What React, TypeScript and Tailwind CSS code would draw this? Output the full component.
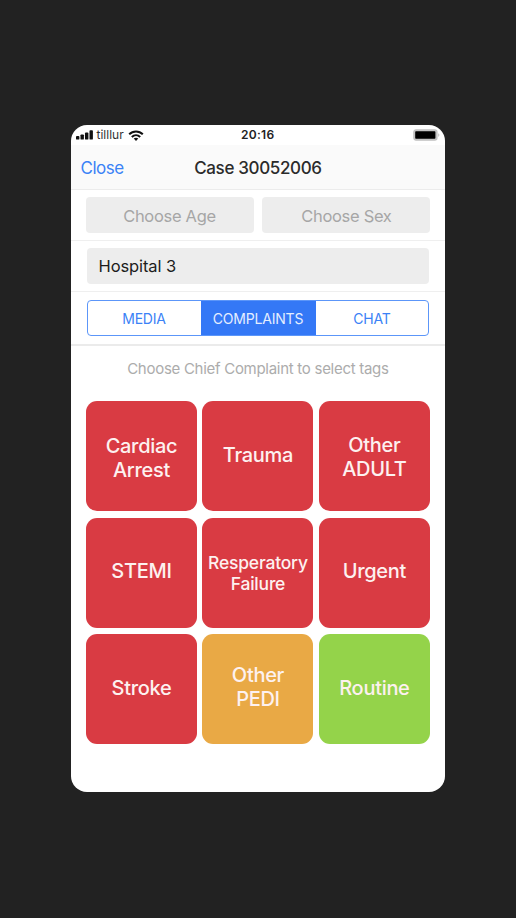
type Complaint = { lines: string[]; color: string; text: string };

const LARGE = "text-[20px] leading-[24px] tracking-[-0.3px]";
const SMALL = "text-[17.5px] leading-[21px] tracking-[-0.2px]";

const complaints: Complaint[] = [
  { lines: ["Cardiac", "Arrest"], color: "bg-[#d93b43]", text: `${LARGE} pt-[3px]` },
  { lines: ["Trauma"], color: "bg-[#d93b43]", text: `${LARGE} pb-[3px]` },
  { lines: ["Other", "ADULT"], color: "bg-[#d93b43]", text: `${LARGE} pt-[1px]` },
  { lines: ["STEMI"], color: "bg-[#d93b43]", text: `${LARGE} pb-[4px]` },
  { lines: ["Resperatory", "Failure"], color: "bg-[#d93b43]", text: SMALL },
  { lines: ["Urgent"], color: "bg-[#d93b43]", text: `${LARGE} pb-[4px]` },
  { lines: ["Stroke"], color: "bg-[#d93b43]", text: `${LARGE} pb-[3px]` },
  { lines: ["Other", "PEDI"], color: "bg-[#e9a945]", text: `${LARGE} pb-[4px]` },
  { lines: ["Routine"], color: "bg-[#94d34a]", text: `${LARGE} pb-[3px]` },
];

function SignalIcon() {
  return (
    <svg width="17" height="10" viewBox="0 0 17 10" fill="#111">
      <rect x="0" y="6" width="3.4" height="3.6" rx="0.9" />
      <rect x="4.5" y="4.4" width="3.4" height="5.2" rx="0.9" />
      <rect x="9" y="2.5" width="3.4" height="7.1" rx="0.9" />
      <rect x="13.5" y="0.2" width="3.4" height="9.4" rx="0.9" />
    </svg>
  );
}

function WifiIcon() {
  return (
    <svg width="16" height="11" viewBox="0 0 16 11" fill="none" stroke="#111" strokeWidth="2">
      <path d="M1.2 4.3C5 0.5 11 0.5 14.8 4.3" />
      <path d="M3.8 7C6.2 4.7 9.8 4.7 12.2 7" />
      <path d="M8 10.9L5.7 8.6C7 7.4 9 7.4 10.3 8.6Z" fill="#111" stroke="none" />
    </svg>
  );
}

function BatteryIcon() {
  return (
    <svg width="27" height="12" viewBox="0 0 27 12">
      <rect x="0.8" y="0.8" width="23.2" height="10.4" rx="2.2" fill="#c4c4c4" stroke="#c4c4c4" strokeWidth="1.2" />
      <rect x="2.2" y="2.2" width="20.2" height="7.6" rx="0.8" fill="#000" />
      <path d="M25.2 4.2C26.8 4.7 26.8 7.3 25.2 7.8Z" fill="#c4c4c4" />
    </svg>
  );
}

export default function App() {
  return (
    <div className="h-[918px] w-[516px] bg-[#222222] pt-[125.4px] pl-[70.5px] font-['Inter','Liberation_Sans',sans-serif]">
      <main className="flex h-[667px] w-[374.9px] flex-col overflow-hidden rounded-[16px] bg-white">
        <div className="grid h-5 shrink-0 grid-cols-[1fr_auto_1fr] items-center pr-[5.5px] pl-[5px] text-[#222]">
          <div className="flex items-center gap-1">
            <SignalIcon />
            <span className="text-[12px] leading-none text-[#333]">tilllur</span>
            <WifiIcon />
          </div>
          <span className="text-[12px] leading-none font-semibold tracking-[0.3px]">20:16</span>
          <div className="flex justify-end">
            <BatteryIcon />
          </div>
        </div>

        <header className="grid h-[45px] shrink-0 grid-cols-[1fr_auto_1fr] items-center border-b border-[#ececec] bg-[#fafafa] px-2.5 pt-[2px]">
          <button className="text-left text-[17px] tracking-[-0.5px] text-[#3b82f6]">Close</button>
          <h1 className="text-[17px] font-medium tracking-[-0.35px] text-[#2b2b2b]">Case 30052006</h1>
        </header>

        <div className="flex h-[51px] shrink-0 items-center justify-between border-b border-[#efefef] px-[15px] text-[16.5px] tracking-[-0.3px] text-[#a6a6a6]">
          <button className="h-9 w-[168px] rounded-[4px] bg-[#ededed] pt-px">Choose Age</button>
          <button className="h-9 w-[168px] rounded-[4px] bg-[#ededed] pt-px">Choose Sex</button>
        </div>

        <div className="flex h-[51px] shrink-0 items-center border-b border-[#efefef] px-4">
          <div className="flex h-9 w-full items-center rounded-[4px] bg-[#ededed] pl-3 text-[16.5px] tracking-[-0.1px] text-[#1c1c1c]">
            Hospital 3
          </div>
        </div>

        <div className="flex h-[54px] shrink-0 items-start border-b-2 border-[#ebebeb] px-4 pt-[8px]">
          <div className="grid h-9 w-full grid-cols-[113px_115px_1fr] overflow-hidden rounded-[4px] border border-[#5c96f9] text-[14px] tracking-[-0.2px] text-[#3b82f6]">
            <button className="pt-px">MEDIA</button>
            <button className="bg-[#3478f6] pt-px text-[#e4eeff]">COMPLAINTS</button>
            <button className="pt-px">CHAT</button>
          </div>
        </div>

        <p className="flex h-[55px] shrink-0 items-start justify-center pt-[13px] text-[15px] leading-[20px] tracking-[-0.28px] text-[#acacac]">
          Choose Chief Complaint to select tags
        </p>

        <div className="grid shrink-0 grid-cols-3 gap-x-[5.5px] gap-y-[6.5px] px-[15.5px]">
          {complaints.map((item) => (
            <button
              key={item.lines.join(" ")}
              className={`flex h-[110px] flex-col items-center justify-center rounded-[11px] font-medium text-[#fdf1f0] ${item.color} ${item.text}`}
            >
              {item.lines.map((line) => (
                <span key={line}>{line}</span>
              ))}
            </button>
          ))}
        </div>
      </main>
    </div>
  );
}
